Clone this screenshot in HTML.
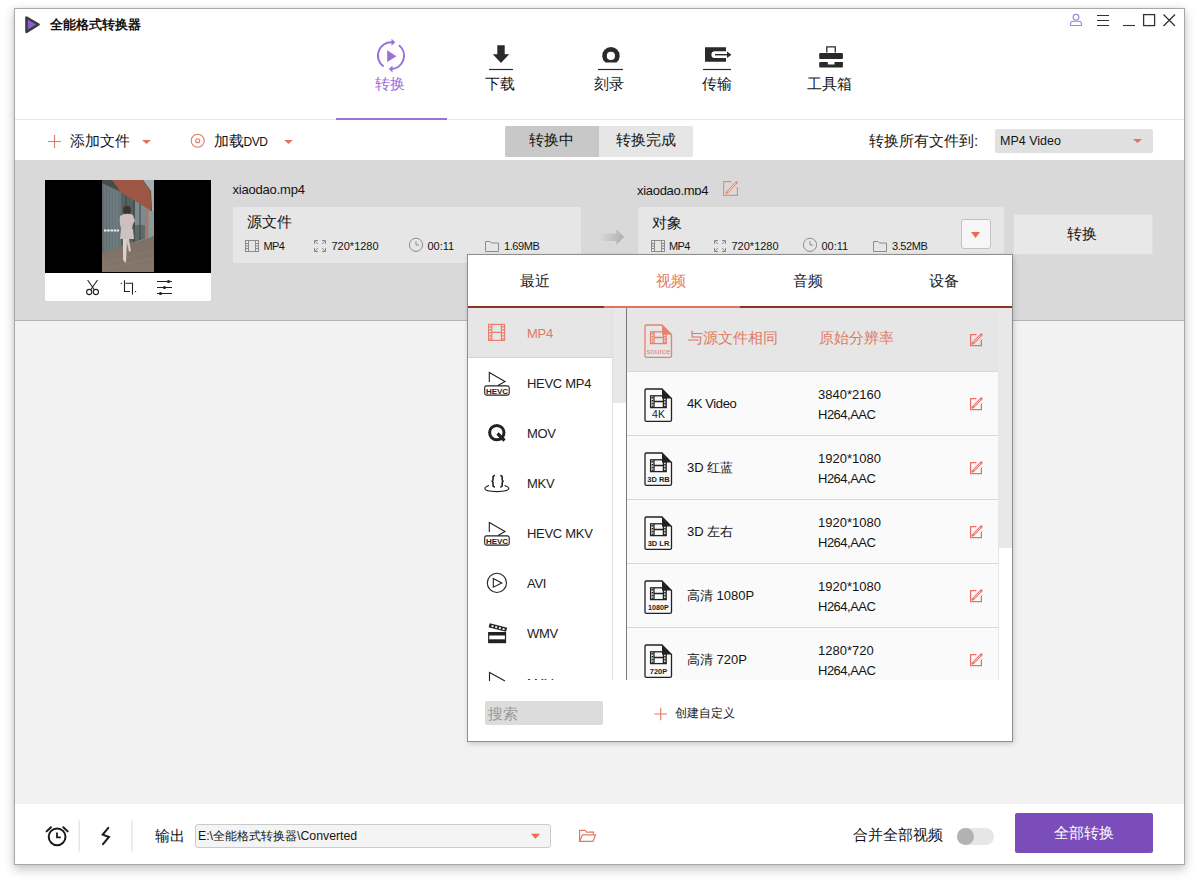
<!DOCTYPE html>
<html><head><meta charset="utf-8">
<style>
*{margin:0;padding:0;box-sizing:border-box}
html,body{width:1199px;height:888px;overflow:hidden;background:#fff;font-family:"Liberation Sans",sans-serif;color:#141414}
.a{position:absolute}
.t{position:absolute;white-space:nowrap;line-height:1}
svg{position:absolute;overflow:visible}
#win{left:14px;top:8px;width:1171px;height:857px;border:1px solid #a8a8a8;box-shadow:0 4px 10px rgba(0,0,0,0.24),0 0 4px rgba(0,0,0,0.06);background:#fff}
</style></head><body>
<div id="win" class="a"></div>
<!-- header -->
<div class="a" style="left:15px;top:119px;width:1169px;height:1px;background:#e8e8e8"></div>
<!-- gray band -->
<div class="a" style="left:15px;top:160px;width:1169px;height:160px;background:#d9d9d9"></div>
<div class="a" style="left:15px;top:320px;width:1169px;height:1px;background:#b4b4b4"></div>
<!-- main area -->
<div class="a" style="left:15px;top:321px;width:1169px;height:483px;background:#f2f2f2"></div>

<!-- logo -->
<svg style="left:0;top:0" width="1199" height="888">
<path d="M26.5 17.5 L38.5 24.5 L26.5 31.8 Z" fill="#8a5fd0" stroke="#3c3c3c" stroke-width="2.6" stroke-linejoin="round"/>
<!-- user icon -->
<circle cx="1076" cy="17.3" r="2.9" fill="none" stroke="#a584dc" stroke-width="1.1"/>
<path d="M1070.5 25.5 L1070.5 24 Q1070.5 21.2 1073.5 21.2 L1078.5 21.2 Q1081.5 21.2 1081.5 24 L1081.5 25.5 Z" fill="none" stroke="#a584dc" stroke-width="1.1"/>
<!-- menu -->
<path d="M1097 15.5H1109M1097 20.5H1109M1097 25.5H1109" stroke="#333" stroke-width="1.1"/>
<!-- minimize -->
<path d="M1123 25.5H1135" stroke="#333" stroke-width="1.1"/>
<!-- maximize -->
<rect x="1143.6" y="14.6" width="11" height="11" fill="none" stroke="#333" stroke-width="1.3"/>
<!-- close -->
<path d="M1163.5 14.5L1175 26M1175 14.5L1163.5 26" stroke="#333" stroke-width="1.3"/>
<!-- convert icon -->
<g stroke="#9a6fd8" stroke-width="2" fill="none">
<path d="M383.6 66.5 A13.3 13.3 0 0 1 392 42.3"/>
<path d="M399 45.3 A13.3 13.3 0 0 1 391 69"/>
</g>
<path d="M391.5 38.8 L395.2 42.3 L391.5 45.8 Z" fill="#9a6fd8"/>
<path d="M392.5 65.5 L388.8 69 L392.5 72.5 Z" fill="#9a6fd8"/>
<path d="M387.2 50.3 L396.4 56.2 L387.2 62 Z" fill="#9a6fd8"/>
<!-- download icon -->
<path d="M497.3 45.3H504.7V54.3H509.2L501 63L492.8 54.3H497.3Z" fill="#2a2a2a"/>
<path d="M489 69.5H513" stroke="#2a2a2a" stroke-width="1.2"/>
<!-- burn icon -->
<path d="M605.4 62.6 A8.75 8.75 0 1 1 616.5 62.6 Z" fill="#2a2a2a"/>
<circle cx="610.9" cy="55.9" r="4.1" fill="#fff"/>
<path d="M598 69.5H623" stroke="#2a2a2a" stroke-width="1.2"/>
<!-- transfer icon -->
<path d="M705 47.2H726V51.3H715Q711.4 51.3 711.4 54.65Q711.4 58 715 58H726V61.8H705Z" fill="#2a2a2a"/>
<path d="M715 54.7H728" stroke="#2a2a2a" stroke-width="1.4"/>
<path d="M727 51.5L731.5 54.7L727 57.9Z" fill="#2a2a2a"/>
<path d="M703 69.5H731" stroke="#2a2a2a" stroke-width="1.2"/>
<!-- toolbox -->
<path d="M826.8 52.5V46.8H835.3V52.5" fill="none" stroke="#2a2a2a" stroke-width="1.3"/>
<rect x="819.2" y="53" width="23.7" height="6.1" rx="1.2" fill="#2a2a2a"/>
<path d="M820.4 62H827.8V64.6H834.5V62H842.9V66.4Q842.9 67.6 841.7 67.6H820.4Q819.2 67.6 819.2 66.4V63.2Q819.2 62 820.4 62Z" fill="#2a2a2a"/>
<!-- purple underline -->
<rect x="336" y="118" width="111" height="2" fill="#9a72d8"/>
<!-- toolbar: plus -->
<path d="M48 141.5H61M54.5 135V148" stroke="#e07a66" stroke-width="1.1"/>
<path d="M142 140H151L146.5 144Z" fill="#e8705c"/>
<circle cx="197.7" cy="140.8" r="6.5" fill="none" stroke="#e07a66" stroke-width="1.1"/>
<circle cx="197.7" cy="140.8" r="2" fill="none" stroke="#e07a66" stroke-width="1.1"/>
<path d="M284.2 140H292.8L288.5 144Z" fill="#e8705c"/>
</svg>
<div class="t" style="left:50px;top:19px;font-size:12.5px;font-weight:bold;color:#111">全能格式转换器</div>
<div class="t" style="left:375px;top:76px;font-size:15px;color:#9a6fd8">转换</div>
<div class="t" style="left:485px;top:76px;font-size:15px;color:#141414">下载</div>
<div class="t" style="left:594px;top:76px;font-size:15px;color:#141414">刻录</div>
<div class="t" style="left:702px;top:76px;font-size:15px;color:#141414">传输</div>
<div class="t" style="left:807px;top:76px;font-size:15px;color:#141414">工具箱</div>
<div class="t" style="left:69.5px;top:133px;font-size:15px;color:#141414">添加文件</div>
<div class="t" style="left:213.5px;top:133px;font-size:15px;color:#141414">加载<span style="font-size:12px;letter-spacing:-0.5px">DVD</span></div>
<!-- segmented -->
<div class="a" style="left:505px;top:126px;width:188px;height:31px;border-radius:2px;background:#e6e6e6;overflow:hidden"><div class="a" style="left:0;top:0;width:94px;height:31px;background:#c8c8c8"></div></div>
<div class="t" style="left:528.5px;top:132px;font-size:15px;color:#141414">转换中</div>
<div class="t" style="left:615.5px;top:132px;font-size:15px;color:#141414">转换完成</div>
<div class="t" style="left:869px;top:133px;font-size:15px;color:#141414">转换所有文件到:</div>
<div class="a" style="left:995px;top:129px;width:158px;height:24px;border-radius:2px;background:#e0e0e0"></div>
<div class="t" style="left:1000px;top:135px;font-size:12.5px;color:#141414">MP4 Video</div>
<svg style="left:0;top:0" width="1199" height="888"><path d="M1133 139H1142L1137.5 143Z" fill="#e8705c"/></svg>

<!-- ===== file item ===== -->
<div class="a" style="left:45px;top:180px;width:166px;height:121px;background:#fff;border-radius:0 0 2px 2px"></div>
<div class="a" style="left:45px;top:180px;width:166px;height:93px;background:#000"></div>
<svg style="left:102px;top:180px" width="52" height="92" viewBox="0 0 52 92">
<defs><linearGradient id="fl" x1="0" y1="0" x2="0" y2="1"><stop offset="0" stop-color="#7b6f66"/><stop offset="1" stop-color="#85766b"/></linearGradient>
<linearGradient id="gl" x1="0" y1="0" x2="1" y2="0"><stop offset="0" stop-color="#5f6b6e"/><stop offset="1" stop-color="#6a777a"/></linearGradient></defs>
<rect width="52" height="92" fill="#7b8487"/>
<path d="M0 0H20V71L0 73Z" fill="url(#gl)"/>
<path d="M3 2V72M6 2V72M9 3V71M12 5V71M15 7V70" stroke="#8a979a" stroke-width="0.8" opacity="0.6"/>
<path d="M19 11L44 28V58L19 66Z" fill="#56625f"/><path d="M33 20L43 27V45H33Z" fill="#7d8b8f"/><path d="M33 45H43V58L33 61Z" fill="#5d6a6a"/>
<path d="M24 16V64M32 20V62M38 24V60" stroke="#3d4345" stroke-width="1"/>
<path d="M0 0H10L19 11L19 12L0 3Z" fill="#464b4c"/>
<path d="M10.5 0H41L49 11L50 31L18.5 12Z" fill="#9c5643"/><path d="M41 0L49 11L50 31" fill="none" stroke="#3a3f40" stroke-width="1"/>
<path d="M41 0H52V45L50 31L49 11Z" fill="#a6adae"/>
<path d="M43 27L46.5 30V60L43 60Z" fill="#a57a66"/>
<path d="M46.5 31H52V56L46.5 59Z" fill="#8f999a"/>
<path d="M0 92V73L20 66L44 59L52 56V92Z" fill="url(#fl)"/>
<path d="M0 84L52 70M0 89L52 78" stroke="#978a7e" stroke-width="0.6" opacity="0.6"/>
<ellipse cx="25" cy="30" rx="4" ry="4.2" fill="#3b3430"/>
<path d="M18 36Q24 32 31 35L33 41Q30 44 30 50L20 51Q17 44 18 36Z" fill="#cdbfbd"/>
<path d="M19 49H31L32 59H18Z" fill="#c9c4c2"/>
<path d="M21 59L21 80L24 83L25 59Z" fill="#ddd0c8"/>
<path d="M24 59L27 72L29 71L27 59Z" fill="#d3c6bf"/>
<path d="M2 50.5H17" stroke="#f0f0f0" stroke-width="2" stroke-dasharray="2.5 0.8"/>
</svg>
<svg style="left:0;top:0" width="1199" height="888">
<g fill="none" stroke="#222" stroke-width="1.1">
<circle cx="89.2" cy="292" r="2.6"/><circle cx="95.9" cy="292" r="2.6"/>
<path d="M87.6 280L94.3 289.8M97.5 280L90.8 289.8"/>
<path d="M124.5 280.3V291.5H130M125.5 283.3H132.5V294.5"/>
<path d="M157 281.5H172M157 287.5H172M157 293.5H172"/>
</g>
<g fill="#222"><rect x="120.8" y="282.8" width="1.1" height="1.1"/><rect x="135" y="291" width="1.1" height="1.1"/>
<circle cx="168.5" cy="281.5" r="1.6"/><circle cx="164.5" cy="287.5" r="1.6"/><circle cx="160.5" cy="293.5" r="1.6"/></g>
</svg>
<div class="t" style="left:232.5px;top:183px;font-size:13px;letter-spacing:-0.2px;color:#141414">xiaodao.mp4</div>
<!-- source box -->
<div class="a" style="left:233px;top:207px;width:348px;height:56px;background:#e6e6e6;border-radius:2px"></div>
<div class="t" style="left:247px;top:214px;font-size:15px;color:#141414">源文件</div>
<!-- target -->
<div class="a" style="left:637px;top:180px;width:80px;height:15px;overflow:hidden"><div class="t" style="left:0;top:3.5px;font-size:13px;letter-spacing:-0.3px;color:#141414">xiaodao.mp4</div></div>
<div class="a" style="left:638px;top:207px;width:366px;height:56px;background:#e6e6e6;border-radius:2px"></div>
<div class="t" style="left:652px;top:215px;font-size:15px;color:#141414">对象</div>
<div class="a" style="left:961px;top:219px;width:30px;height:30px;background:#f6f6f6;border:1px solid #c2c2c2;border-radius:3px"></div>
<div class="a" style="left:1013px;top:214px;width:140px;height:41px;background:#e8e8e8;border:1px solid #dedede"></div>
<div class="t" style="left:1067px;top:226px;font-size:15px;color:#141414">转换</div>
<svg style="left:0;top:0" width="1199" height="888">
<defs><linearGradient id="ar" x1="0" x2="1"><stop offset="0" stop-color="#d6d6d6"/><stop offset="1" stop-color="#b0b0b0"/></linearGradient></defs>
<path d="M600.5 233.5H616.3V229L624.2 237L616.3 245V241H600.5Z" fill="url(#ar)"/>
<path d="M971 232H980L975.5 238Z" fill="#f06a50"/>
<g fill="none" stroke="#ee8a78" stroke-width="1.2"><path d="M731.5 181.6H723.6V195.4H737.4V187"/><path d="M726.8 192.6L736.6 182.4" stroke-width="2.6" stroke-linecap="round"/><path d="M727.6 191.8L735.8 183.2" stroke="#fde6e1" stroke-width="0.9"/></g>
<svg style="left:0;top:0" width="1199" height="888"><g fill="none" stroke="#8c8c8c" stroke-width="1"><rect x="245.5" y="240.5" width="13" height="11"/><path d="M248.5 240V252M255.5 240V252M245 243.5H248.5M245 246H248.5M245 248.5H248.5M255.5 243.5H259M255.5 246H259M255.5 248.5H259"/></g><g fill="none" stroke="#8c8c8c" stroke-width="1"><path d="M314.5 244V240.5H318M314.5 240.5L318 244M325.5 244V240.5H322M325.5 240.5L322 244M314.5 248V251.5H318M314.5 251.5L318 248M325.5 248V251.5H322M325.5 251.5L322 248"/></g><g fill="none" stroke="#8c8c8c" stroke-width="1"><circle cx="416" cy="244.8" r="6.6"/><path d="M416 241V245H419"/></g><path d="M485.5 251.5V241.5H490L491.5 243H498.5V251.5Z" fill="none" stroke="#8c8c8c" stroke-width="1"/><g fill="none" stroke="#8c8c8c" stroke-width="1"><rect x="651.5" y="240.5" width="13" height="11"/><path d="M654.5 240V252M661.5 240V252M651 243.5H654.5M651 246H654.5M651 248.5H654.5M661.5 243.5H665M661.5 246H665M661.5 248.5H665"/></g><g fill="none" stroke="#8c8c8c" stroke-width="1"><path d="M714.5 244V240.5H718M714.5 240.5L718 244M725.5 244V240.5H722M725.5 240.5L722 244M714.5 248V251.5H718M714.5 251.5L718 248M725.5 248V251.5H722M725.5 251.5L722 248"/></g><g fill="none" stroke="#8c8c8c" stroke-width="1"><circle cx="810" cy="244.8" r="6.6"/><path d="M810 241V245H813"/></g><path d="M873.5 251.5V241.5H878L879.5 243H886.5V251.5Z" fill="none" stroke="#8c8c8c" stroke-width="1"/></svg>
<div class="t" style="left:263.5px;top:240.5px;font-size:11px;color:#141414;letter-spacing:-0.6px">MP4</div>
<div class="t" style="left:331.5px;top:240.5px;font-size:11px;color:#141414;">720*1280</div>
<div class="t" style="left:427.5px;top:240.5px;font-size:11px;color:#141414;">00:11</div>
<div class="t" style="left:504px;top:240.5px;font-size:11px;color:#141414;letter-spacing:-0.4px">1.69MB</div>
<div class="t" style="left:669px;top:240.5px;font-size:11px;color:#141414;letter-spacing:-0.6px">MP4</div>
<div class="t" style="left:731.5px;top:240.5px;font-size:11px;color:#141414;">720*1280</div>
<div class="t" style="left:821.5px;top:240.5px;font-size:11px;color:#141414;">00:11</div>
<div class="t" style="left:892px;top:240.5px;font-size:11px;color:#141414;letter-spacing:-0.4px">3.52MB</div>
<div class="a" style="left:467px;top:254px;width:546px;height:488px;background:#fff;border:1px solid #8e8e8e;box-shadow:1px 2px 5px rgba(0,0,0,0.16)"></div>
<div class="t" style="left:520px;top:273px;font-size:15px;color:#222;">最近</div>
<div class="t" style="left:656px;top:273px;font-size:15px;color:#e07a63;">视频</div>
<div class="t" style="left:793px;top:273px;font-size:15px;color:#222;">音频</div>
<div class="t" style="left:929px;top:273px;font-size:15px;color:#222;">设备</div>
<div class="a" style="left:468px;top:306px;width:544px;height:2px;background:#8e3424"></div>
<div class="a" style="left:604px;top:306px;width:136px;height:2px;background:#e4705e"></div>
<div class="a" style="left:468px;top:308px;width:144px;height:372px;background:#fff;overflow:hidden"><div class="a" style="left:0;top:0;width:144px;height:50px;background:#e6e6e6;border-bottom:1px solid #d4d4d4"></div><div class="t" style="left:59px;top:19px;font-size:13px;letter-spacing:-0.3px;color:#e07a63">MP4</div><div class="t" style="left:59px;top:69px;font-size:13px;letter-spacing:-0.3px;color:#222">HEVC MP4</div><div class="t" style="left:59px;top:119px;font-size:13px;letter-spacing:-0.3px;color:#222">MOV</div><div class="t" style="left:59px;top:169px;font-size:13px;letter-spacing:-0.3px;color:#222">MKV</div><div class="t" style="left:59px;top:219px;font-size:13px;letter-spacing:-0.3px;color:#222">HEVC MKV</div><div class="t" style="left:59px;top:269px;font-size:13px;letter-spacing:-0.3px;color:#222">AVI</div><div class="t" style="left:59px;top:319px;font-size:13px;letter-spacing:-0.3px;color:#222">WMV</div><div class="t" style="left:59px;top:369px;font-size:13px;letter-spacing:-0.3px;color:#222">M4V</div></div>
<div class="a" style="left:612px;top:308px;width:14px;height:372px;background:#fff;border-left:1px solid #e0e0e0"></div><div class="a" style="left:613px;top:308px;width:13px;height:95px;background:#e8e8e8"></div><div class="a" style="left:626px;top:308px;width:1px;height:372px;background:#787878"></div>
<div class="a" style="left:627px;top:308px;width:371px;height:372px;background:#fff;overflow:hidden"><div class="a" style="left:0;top:0px;width:371px;height:64px;background:#e6e6e6;border-bottom:1px solid #d8d8d8"></div><div class="t" style="left:61px;top:22px;font-size:15px;color:#e07a63">与源文件相同</div><div class="t" style="left:192px;top:22px;font-size:15px;color:#e07a63">原始分辨率</div><div class="a" style="left:0;top:64px;width:371px;height:64px;background:#fafafa;border-bottom:1px solid #d8d8d8"></div><div class="t" style="left:60px;top:89px;font-size:13px;letter-spacing:-0.4px;color:#141414">4K Video</div><div class="t" style="left:191px;top:80px;font-size:13px;color:#141414">3840*2160</div><div class="t" style="left:191px;top:100px;font-size:13px;letter-spacing:-0.5px;color:#141414">H264,AAC</div><div class="a" style="left:0;top:128px;width:371px;height:64px;background:#fafafa;border-bottom:1px solid #d8d8d8"></div><div class="t" style="left:60px;top:153px;font-size:13px;color:#141414">3D 红蓝</div><div class="t" style="left:191px;top:144px;font-size:13px;color:#141414">1920*1080</div><div class="t" style="left:191px;top:164px;font-size:13px;letter-spacing:-0.5px;color:#141414">H264,AAC</div><div class="a" style="left:0;top:192px;width:371px;height:64px;background:#fafafa;border-bottom:1px solid #d8d8d8"></div><div class="t" style="left:60px;top:217px;font-size:13px;color:#141414">3D 左右</div><div class="t" style="left:191px;top:208px;font-size:13px;color:#141414">1920*1080</div><div class="t" style="left:191px;top:228px;font-size:13px;letter-spacing:-0.5px;color:#141414">H264,AAC</div><div class="a" style="left:0;top:256px;width:371px;height:64px;background:#fafafa;border-bottom:1px solid #d8d8d8"></div><div class="t" style="left:60px;top:281px;font-size:13px;color:#141414">高清 1080P</div><div class="t" style="left:191px;top:272px;font-size:13px;color:#141414">1920*1080</div><div class="t" style="left:191px;top:292px;font-size:13px;letter-spacing:-0.5px;color:#141414">H264,AAC</div><div class="a" style="left:0;top:320px;width:371px;height:64px;background:#fafafa;border-bottom:1px solid #d8d8d8"></div><div class="t" style="left:60px;top:345px;font-size:13px;color:#141414">高清 720P</div><div class="t" style="left:191px;top:336px;font-size:13px;color:#141414">1280*720</div><div class="t" style="left:191px;top:356px;font-size:13px;letter-spacing:-0.5px;color:#141414">H264,AAC</div></div>
<div class="a" style="left:998px;top:308px;width:14px;height:372px;background:#fff;border-left:1px solid #e6e6e6"></div><div class="a" style="left:998px;top:308px;width:14px;height:240px;background:#e8e8e8"></div>
<div class="a" style="left:485px;top:701px;width:118px;height:24px;background:#dcdcdc;border-radius:2px"></div><div class="t" style="left:488px;top:706px;font-size:15px;color:#9a9a9a;">搜索</div>
<div class="t" style="left:674.5px;top:707px;font-size:12px;color:#222;">创建自定义</div>
<svg style="left:0;top:0" width="1199" height="888"><g fill="none" stroke="#e8806c" stroke-width="1.2"><rect x="488.6" y="324.4" width="16" height="16"/><path d="M491.8 324.4V340.4M501.4 324.4V340.4M491.8 332.4H501.4"/></g><g fill="#e8806c"><rect x="489.4" y="326" width="1.6" height="1.6"/><rect x="502.2" y="326" width="1.6" height="1.6"/><rect x="489.4" y="329" width="1.6" height="1.6"/><rect x="502.2" y="329" width="1.6" height="1.6"/><rect x="489.4" y="332" width="1.6" height="1.6"/><rect x="502.2" y="332" width="1.6" height="1.6"/><rect x="489.4" y="335" width="1.6" height="1.6"/><rect x="502.2" y="335" width="1.6" height="1.6"/><rect x="489.4" y="338" width="1.6" height="1.6"/><rect x="502.2" y="338" width="1.6" height="1.6"/></g><path d="M489.3 382V372.5L505 381.5L498 385.5" fill="none" stroke="#222" stroke-width="1.1"/><rect x="484.7" y="385.9" width="24.5" height="9.2" rx="1.8" fill="#fff" stroke="#222" stroke-width="1.1"/><text x="497" y="393.6" font-family="Liberation Sans" font-weight="bold" font-size="8" text-anchor="middle" fill="#222">HEVC</text><path d="M489.3 532V522.5L505 531.5L498 535.5" fill="none" stroke="#222" stroke-width="1.1"/><rect x="484.7" y="535.9" width="24.5" height="9.2" rx="1.8" fill="#fff" stroke="#222" stroke-width="1.1"/><text x="497" y="543.6" font-family="Liberation Sans" font-weight="bold" font-size="8" text-anchor="middle" fill="#222">HEVC</text><circle cx="496.8" cy="432.6" r="7.2" fill="none" stroke="#222" stroke-width="3"/><path d="M497.5 433.5L504.5 440.5" stroke="#222" stroke-width="3.2"/><path d="M489 485.5Q484.8 487 484.8 488.3Q484.8 491.6 496.8 491.6Q508.8 491.6 508.8 488.3Q508.8 487 504.5 485.5" fill="none" stroke="#222" stroke-width="1.1"/><g fill="none" stroke="#222" stroke-width="1.6"><path d="M495 475.5Q493 475.5 493 477.5V479.8Q493 481 491.6 481.2Q493 481.4 493 482.6V485Q493 487 495 487"/><path d="M500.2 475.5Q502.2 475.5 502.2 477.5V479.8Q502.2 481 503.6 481.2Q502.2 481.4 502.2 482.6V485Q502.2 487 500.2 487"/></g><circle cx="496.9" cy="582.9" r="9.6" fill="none" stroke="#222" stroke-width="1.1"/><path d="M493.3 578.6L501.8 582.9L493.3 587.2Z" fill="none" stroke="#222" stroke-width="1.1"/><path d="M489.8 623.2L507.2 627.8L506 631.8L488.6 627.2Z" fill="#222"/><rect x="491.5" y="625.3" width="2" height="1.8" fill="#fff" transform="rotate(15 492.5 626.2)"/><rect x="495.2" y="626.27" width="2" height="1.8" fill="#fff" transform="rotate(15 496.2 627.1700000000001)"/><rect x="498.9" y="627.24" width="2" height="1.8" fill="#fff" transform="rotate(15 499.9 628.1400000000001)"/><rect x="502.6" y="628.2099999999999" width="2" height="1.8" fill="#fff" transform="rotate(15 503.6 629.11)"/><rect x="488.1" y="632" width="18" height="11.2" fill="#222"/><rect x="489.3" y="635.5" width="15.6" height="3.8" fill="#fff"/><path d="M489.5 681V672.5L505 681" fill="none" stroke="#222" stroke-width="1.1"/><rect x="612" y="680" width="20" height="2" fill="#fff"/><path d="M646.5 325H662L671.5 334.5V356Q671.5 357.3 670 357.3H646.5Q645 357.3 645 356V326.5Q645 325 646.5 325Z" fill="none" stroke="#e8806c" stroke-width="1.3"/><path d="M662 325L671.5 334.5H662Z" fill="#e8806c"/><g fill="none" stroke="#e8806c" stroke-width="1.3"><rect x="650.6" y="331.8" width="15.6" height="11.8"/><path d="M654 331.8V343.6M663.4 331.8V343.6M654 337.5H663.4"/></g><rect x="651.6" y="333.0" width="1.6" height="1.6" fill="#e8806c"/><rect x="664.2" y="333.0" width="1.6" height="1.6" fill="#e8806c"/><rect x="651.6" y="335.9" width="1.6" height="1.6" fill="#e8806c"/><rect x="664.2" y="335.9" width="1.6" height="1.6" fill="#e8806c"/><rect x="651.6" y="338.8" width="1.6" height="1.6" fill="#e8806c"/><rect x="664.2" y="338.8" width="1.6" height="1.6" fill="#e8806c"/><rect x="651.6" y="341.7" width="1.6" height="1.6" fill="#e8806c"/><rect x="664.2" y="341.7" width="1.6" height="1.6" fill="#e8806c"/><text x="658.5" y="354" font-family="Liberation Sans" font-weight="normal" font-size="8" text-anchor="middle" fill="#e8806c">source</text><path d="M646.5 389H662L671.5 398.5V420Q671.5 421.3 670 421.3H646.5Q645 421.3 645 420V390.5Q645 389 646.5 389Z" fill="none" stroke="#222" stroke-width="1.3"/><path d="M662 389L671.5 398.5H662Z" fill="#222"/><g fill="none" stroke="#222" stroke-width="1.3"><rect x="650.6" y="395.8" width="15.6" height="11.8"/><path d="M654 395.8V407.6M663.4 395.8V407.6M654 401.5H663.4"/></g><rect x="651.6" y="397.0" width="1.6" height="1.6" fill="#222"/><rect x="664.2" y="397.0" width="1.6" height="1.6" fill="#222"/><rect x="651.6" y="399.9" width="1.6" height="1.6" fill="#222"/><rect x="664.2" y="399.9" width="1.6" height="1.6" fill="#222"/><rect x="651.6" y="402.8" width="1.6" height="1.6" fill="#222"/><rect x="664.2" y="402.8" width="1.6" height="1.6" fill="#222"/><rect x="651.6" y="405.7" width="1.6" height="1.6" fill="#222"/><rect x="664.2" y="405.7" width="1.6" height="1.6" fill="#222"/><text x="658.5" y="418" font-family="Liberation Sans" font-weight="normal" font-size="10.5" text-anchor="middle" fill="#222">4K</text><path d="M646.5 453H662L671.5 462.5V484Q671.5 485.3 670 485.3H646.5Q645 485.3 645 484V454.5Q645 453 646.5 453Z" fill="none" stroke="#222" stroke-width="1.3"/><path d="M662 453L671.5 462.5H662Z" fill="#222"/><g fill="none" stroke="#222" stroke-width="1.3"><rect x="650.6" y="459.8" width="15.6" height="11.8"/><path d="M654 459.8V471.6M663.4 459.8V471.6M654 465.5H663.4"/></g><rect x="651.6" y="461.0" width="1.6" height="1.6" fill="#222"/><rect x="664.2" y="461.0" width="1.6" height="1.6" fill="#222"/><rect x="651.6" y="463.9" width="1.6" height="1.6" fill="#222"/><rect x="664.2" y="463.9" width="1.6" height="1.6" fill="#222"/><rect x="651.6" y="466.8" width="1.6" height="1.6" fill="#222"/><rect x="664.2" y="466.8" width="1.6" height="1.6" fill="#222"/><rect x="651.6" y="469.7" width="1.6" height="1.6" fill="#222"/><rect x="664.2" y="469.7" width="1.6" height="1.6" fill="#222"/><text x="658.5" y="482" font-family="Liberation Sans" font-weight="bold" font-size="7.5" text-anchor="middle" fill="#222">3D RB</text><path d="M646.5 517H662L671.5 526.5V548Q671.5 549.3 670 549.3H646.5Q645 549.3 645 548V518.5Q645 517 646.5 517Z" fill="none" stroke="#222" stroke-width="1.3"/><path d="M662 517L671.5 526.5H662Z" fill="#222"/><g fill="none" stroke="#222" stroke-width="1.3"><rect x="650.6" y="523.8" width="15.6" height="11.8"/><path d="M654 523.8V535.6M663.4 523.8V535.6M654 529.5H663.4"/></g><rect x="651.6" y="525.0" width="1.6" height="1.6" fill="#222"/><rect x="664.2" y="525.0" width="1.6" height="1.6" fill="#222"/><rect x="651.6" y="527.9" width="1.6" height="1.6" fill="#222"/><rect x="664.2" y="527.9" width="1.6" height="1.6" fill="#222"/><rect x="651.6" y="530.8" width="1.6" height="1.6" fill="#222"/><rect x="664.2" y="530.8" width="1.6" height="1.6" fill="#222"/><rect x="651.6" y="533.7" width="1.6" height="1.6" fill="#222"/><rect x="664.2" y="533.7" width="1.6" height="1.6" fill="#222"/><text x="658.5" y="546" font-family="Liberation Sans" font-weight="bold" font-size="7.5" text-anchor="middle" fill="#222">3D LR</text><path d="M646.5 581H662L671.5 590.5V612Q671.5 613.3 670 613.3H646.5Q645 613.3 645 612V582.5Q645 581 646.5 581Z" fill="none" stroke="#222" stroke-width="1.3"/><path d="M662 581L671.5 590.5H662Z" fill="#222"/><g fill="none" stroke="#222" stroke-width="1.3"><rect x="650.6" y="587.8" width="15.6" height="11.8"/><path d="M654 587.8V599.6M663.4 587.8V599.6M654 593.5H663.4"/></g><rect x="651.6" y="589.0" width="1.6" height="1.6" fill="#222"/><rect x="664.2" y="589.0" width="1.6" height="1.6" fill="#222"/><rect x="651.6" y="591.9" width="1.6" height="1.6" fill="#222"/><rect x="664.2" y="591.9" width="1.6" height="1.6" fill="#222"/><rect x="651.6" y="594.8" width="1.6" height="1.6" fill="#222"/><rect x="664.2" y="594.8" width="1.6" height="1.6" fill="#222"/><rect x="651.6" y="597.7" width="1.6" height="1.6" fill="#222"/><rect x="664.2" y="597.7" width="1.6" height="1.6" fill="#222"/><text x="658.5" y="610" font-family="Liberation Sans" font-weight="bold" font-size="7.2" text-anchor="middle" fill="#222">1080P</text><path d="M646.5 645H662L671.5 654.5V676Q671.5 677.3 670 677.3H646.5Q645 677.3 645 676V646.5Q645 645 646.5 645Z" fill="none" stroke="#222" stroke-width="1.3"/><path d="M662 645L671.5 654.5H662Z" fill="#222"/><g fill="none" stroke="#222" stroke-width="1.3"><rect x="650.6" y="651.8" width="15.6" height="11.8"/><path d="M654 651.8V663.6M663.4 651.8V663.6M654 657.5H663.4"/></g><rect x="651.6" y="653.0" width="1.6" height="1.6" fill="#222"/><rect x="664.2" y="653.0" width="1.6" height="1.6" fill="#222"/><rect x="651.6" y="655.9" width="1.6" height="1.6" fill="#222"/><rect x="664.2" y="655.9" width="1.6" height="1.6" fill="#222"/><rect x="651.6" y="658.8" width="1.6" height="1.6" fill="#222"/><rect x="664.2" y="658.8" width="1.6" height="1.6" fill="#222"/><rect x="651.6" y="661.7" width="1.6" height="1.6" fill="#222"/><rect x="664.2" y="661.7" width="1.6" height="1.6" fill="#222"/><text x="658.5" y="674" font-family="Liberation Sans" font-weight="bold" font-size="7.5" text-anchor="middle" fill="#222">720P</text><g fill="none" stroke="#e2746a" stroke-width="1.3"><path d="M976.5 334.6H970.6V345.6H981.4V339.5"/></g><path d="M972.8 343.4L981.4 334.6" stroke="#e2746a" stroke-width="2.6" stroke-linecap="round"/><path d="M973.6 342.6L980.6 335.4" stroke="#fbe3df" stroke-width="0.9"/><g fill="none" stroke="#e2746a" stroke-width="1.3"><path d="M976.5 398.6H970.6V409.6H981.4V403.5"/></g><path d="M972.8 407.4L981.4 398.6" stroke="#e2746a" stroke-width="2.6" stroke-linecap="round"/><path d="M973.6 406.6L980.6 399.4" stroke="#fbe3df" stroke-width="0.9"/><g fill="none" stroke="#e2746a" stroke-width="1.3"><path d="M976.5 462.6H970.6V473.6H981.4V467.5"/></g><path d="M972.8 471.4L981.4 462.6" stroke="#e2746a" stroke-width="2.6" stroke-linecap="round"/><path d="M973.6 470.6L980.6 463.4" stroke="#fbe3df" stroke-width="0.9"/><g fill="none" stroke="#e2746a" stroke-width="1.3"><path d="M976.5 526.6H970.6V537.6H981.4V531.5"/></g><path d="M972.8 535.4L981.4 526.6" stroke="#e2746a" stroke-width="2.6" stroke-linecap="round"/><path d="M973.6 534.6L980.6 527.4" stroke="#fbe3df" stroke-width="0.9"/><g fill="none" stroke="#e2746a" stroke-width="1.3"><path d="M976.5 590.6H970.6V601.6H981.4V595.5"/></g><path d="M972.8 599.4L981.4 590.6" stroke="#e2746a" stroke-width="2.6" stroke-linecap="round"/><path d="M973.6 598.6L980.6 591.4" stroke="#fbe3df" stroke-width="0.9"/><g fill="none" stroke="#e2746a" stroke-width="1.3"><path d="M976.5 654.6H970.6V665.6H981.4V659.5"/></g><path d="M972.8 663.4L981.4 654.6" stroke="#e2746a" stroke-width="2.6" stroke-linecap="round"/><path d="M973.6 662.6L980.6 655.4" stroke="#fbe3df" stroke-width="0.9"/><path d="M654.5 714H667M660.7 707.7V720.3" stroke="#e07a66" stroke-width="1.1"/></svg>
<div class="a" style="left:195px;top:824px;width:356px;height:24px;background:#f4f4f4;border:1px solid #cacaca;border-radius:3px"></div><svg style="left:0;top:0" width="1199" height="888"><g fill="none" stroke="#1a1a1a" stroke-width="2"><circle cx="57.1" cy="836.8" r="8.4"/><path d="M57 832.6V837.4H60.8" stroke-width="1.8"/><path d="M46.6 831.4L51 827.2M63.3 827.2L67.7 831.4" stroke-linecap="round"/></g><path d="M108.3 827.8L102.7 834.6L109 837L103 844.2" fill="none" stroke="#1a1a1a" stroke-width="2" stroke-linecap="round" stroke-linejoin="miter"/><rect x="78.5" y="820.5" width="1.5" height="31" fill="#e6e6e6"/><rect x="131" y="820.5" width="1.5" height="31" fill="#e6e6e6"/><path d="M531 833.8H540L535.5 838.7Z" fill="#f06a50"/><g fill="none" stroke="#e07a66" stroke-width="1.2"><path d="M579.6 841.4V830.4H585L586.6 832.2H593.4V834.6"/><path d="M579.6 841.4H593L595.6 834.8H582.4L579.6 841.4Z"/></g></svg>
<div class="t" style="left:155px;top:827.5px;font-size:15px;color:#141414;">输出</div>
<div class="t" style="left:198px;top:830px;font-size:12.3px;color:#141414;">E:\<span style="font-size:12.2px">全能格式转换器</span>\Converted</div>
<div class="t" style="left:852.5px;top:827px;font-size:15px;color:#141414;">合并全部视频</div>
<div class="a" style="left:957px;top:828px;width:37px;height:17px;border-radius:8.5px;background:#e6e6e6"></div><div class="a" style="left:957px;top:828px;width:17px;height:17px;border-radius:50%;background:#b2b2b2"></div><div class="a" style="left:1015px;top:813px;width:138px;height:40px;border-radius:2px;background:#7b4dba"></div><div class="t" style="left:1054px;top:824.5px;font-size:15px;color:#fff;">全部转换</div>
</body></html>
